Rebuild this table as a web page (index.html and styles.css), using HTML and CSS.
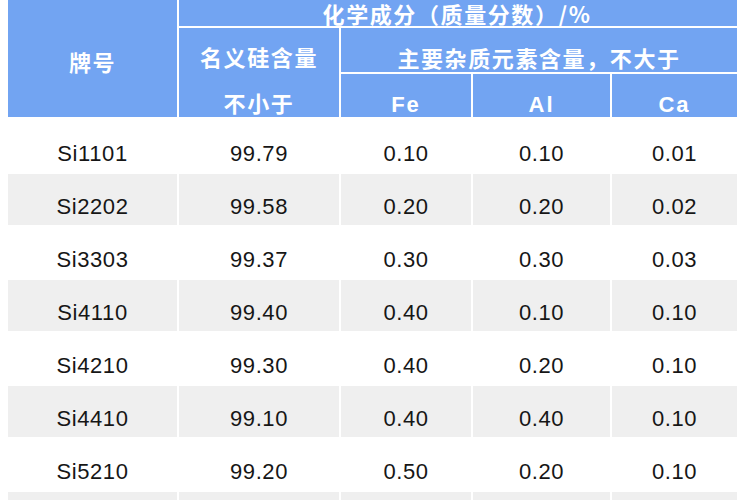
FILE: index.html
```html
<!DOCTYPE html>
<html lang="zh">
<head>
<meta charset="utf-8">
<title>硅牌号化学成分</title>
<link rel="stylesheet" href="styles.css">
</head>
<body>
<div class="sheet">
  <div class="grid">
    <div class="hd hd-grade">牌号</div>
    <div class="hd hd-top">化学成分（质量分数）/%</div>
    <div class="hd hd-si"><span>名义硅含量</span><span>不小于</span></div>
    <div class="hd hd-imp">主要杂质元素含量，不大于</div>
    <div class="hd hd-el">Fe</div>
    <div class="hd hd-el">Al</div>
    <div class="hd hd-el">Ca</div>

    <div class="c first">Si1101</div><div class="c first">99.79</div><div class="c first">0.10</div><div class="c first">0.10</div><div class="c first">0.01</div>
    <div class="c alt">Si2202</div><div class="c alt">99.58</div><div class="c alt">0.20</div><div class="c alt">0.20</div><div class="c alt">0.02</div>
    <div class="c">Si3303</div><div class="c">99.37</div><div class="c">0.30</div><div class="c">0.30</div><div class="c">0.03</div>
    <div class="c alt">Si4110</div><div class="c alt">99.40</div><div class="c alt">0.40</div><div class="c alt">0.10</div><div class="c alt">0.10</div>
    <div class="c">Si4210</div><div class="c">99.30</div><div class="c">0.40</div><div class="c">0.20</div><div class="c">0.10</div>
    <div class="c alt">Si4410</div><div class="c alt">99.10</div><div class="c alt">0.40</div><div class="c alt">0.40</div><div class="c alt">0.10</div>
    <div class="c">Si5210</div><div class="c">99.20</div><div class="c">0.50</div><div class="c">0.20</div><div class="c">0.10</div>
    <div class="c alt"></div><div class="c alt"></div><div class="c alt"></div><div class="c alt"></div><div class="c alt"></div>
  </div>
</div>
</body>
</html>
```

FILE: styles.css
```css
html, body {
  margin: 0;
  padding: 0;
  background: #ffffff;
}

body {
  width: 750px;
  height: 500px;
  overflow: hidden;
}

.sheet {
  padding: 0 13px 0 8px;
}

.grid {
  display: grid;
  grid-template-columns: 169px 160px 130px 137px 125px;
  grid-template-rows: 26px 44px 43px 53px repeat(7, 51px);
  gap: 2px;
  background: #ffffff;
}

.hd {
  background: #72a4f2;
  color: #ffffff;
  font-family: "Noto Sans CJK SC", "Noto Sans", sans-serif;
  font-weight: 700;
  font-size: 22px;
  line-height: 24px;
  letter-spacing: 1.6px;
  display: flex;
  align-items: center;
  justify-content: center;
}

.hd-grade {
  grid-column: 1;
  grid-row: 1 / 4;
  padding-top: 4px;
}

.hd-top {
  grid-column: 2 / 6;
  grid-row: 1;
  padding-right: 2px;
  padding-bottom: 0;
}

.hd-si {
  grid-column: 2;
  grid-row: 2 / 4;
  flex-direction: column;
  justify-content: flex-start;
  padding-top: 5px;
  line-height: 46px;
}

.hd-imp {
  grid-column: 3 / 6;
  grid-row: 2;
  padding-top: 14px;
}

.hd-el {
  grid-row: 3;
  font-family: "Liberation Sans", Arial, sans-serif;
  font-size: 22px;
  letter-spacing: 2px;
  padding-top: 18px;
}

.c {
  background: #ffffff;
  color: #161616;
  font-family: "Liberation Sans", Arial, sans-serif;
  font-size: 22px;
  letter-spacing: 0.6px;
  line-height: 22px;
  display: flex;
  align-items: flex-end;
  justify-content: center;
  padding-bottom: 7px;
}

.c.alt {
  background: #efefef;
}
```
